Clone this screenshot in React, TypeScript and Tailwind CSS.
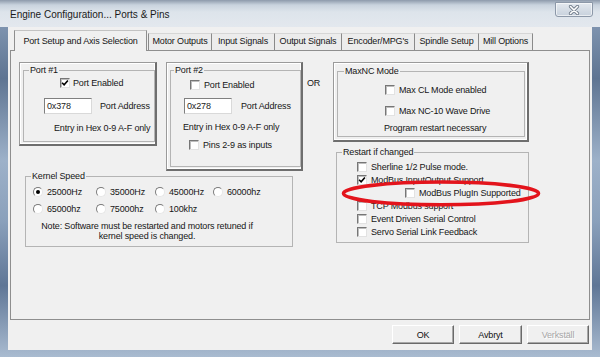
import React from "react";

function CheckBox({ checked }: { checked?: boolean }) {
  return (
    <span className="relative block w-[10px] h-[10px] shrink-0 bg-white border border-t-[#767676] border-l-[#767676] border-r-[#e2e2e2] border-b-[#e2e2e2] shadow-[inset_1px_1px_0_#bdbdbd]">
      {checked && (
        <svg viewBox="0 0 8 8" className="absolute left-0 top-0 w-[8px] h-[8px]">
          <path d="M1.1 3.7 L3.1 5.8 L6.9 1.4" stroke="#000" strokeWidth="1.6" fill="none" />
        </svg>
      )}
    </span>
  );
}

function Radio({ checked }: { checked?: boolean }) {
  return (
    <span className="flex w-[10px] h-[10px] shrink-0 rounded-full bg-white border border-t-[#7a7a7a] border-l-[#7a7a7a] border-r-[#e6e6e6] border-b-[#e6e6e6] items-center justify-center">
      {checked && <span className="block w-[4px] h-[4px] rounded-full bg-black" />}
    </span>
  );
}

function CheckRow({
  label,
  checked,
  className,
  gap = "gap-[4px]",
}: {
  label: string;
  checked?: boolean;
  className?: string;
  gap?: string;
}) {
  return (
    <div className={`flex items-center ${gap} ${className ?? ""}`}>
      <CheckBox checked={checked} />
      <span className="whitespace-nowrap">{label}</span>
    </div>
  );
}

function RadioItem({ label, checked, w }: { label: string; checked?: boolean; w: string }) {
  return (
    <div className={`flex items-center gap-[4px] ${w}`}>
      <Radio checked={checked} />
      <span className="whitespace-nowrap">{label}</span>
    </div>
  );
}

function TextBox({ value }: { value: string }) {
  return (
    <div className="w-[48px] h-[16px] bg-white border border-t-[#7f7f7f] border-l-[#7f7f7f] border-r-[#d9d9d9] border-b-[#d9d9d9] pl-[2px] flex items-center text-[#222]">
      {value}
    </div>
  );
}

function Group({
  label,
  className,
  legendMl,
  children,
}: {
  label: string;
  className: string;
  legendMl: string;
  children?: React.ReactNode;
}) {
  return (
    <fieldset className={`border border-[#b4b4b4] min-w-0 ${className}`}>
      <legend className={`${legendMl} px-[1px] leading-[10px] whitespace-nowrap`}>{label}</legend>
      {children}
    </fieldset>
  );
}

function Panel3D({ className, children }: { className: string; children?: React.ReactNode }) {
  return (
    <div
      className={`border border-t-[#9a9a9a] border-l-[#9a9a9a] border-r-2 border-b-2 border-r-[#6e6e6e] border-b-[#6e6e6e] shadow-[inset_1px_1px_0_#ffffff,inset_-1px_-1px_0_#ffffff] ${className}`}
    >
      {children}
    </div>
  );
}

function Tab({ label, w, first }: { label: string; w: string; first?: boolean }) {
  return (
    <div
      className={`${w} h-[17px] flex justify-center pt-[2px] border-t border-t-[#d6d6d6] border-r border-r-[#8a8a8a] ${
        first ? "ml-[1px] border-l border-l-[#8a8a8a]" : ""
      } bg-[#ececec] whitespace-nowrap`}
    >
      {label}
    </div>
  );
}

function Btn({ label, w, disabled }: { label: string; w: string; disabled?: boolean }) {
  return (
    <div
      className={`${w} h-[19px] flex items-center justify-center bg-[#f0f0f0] border border-t-white border-l-white border-r-[#6a6a6a] border-b-[#6a6a6a] shadow-[inset_-1px_-1px_0_#a8a8a8] ${
        disabled ? "text-[#a6a6a6] [text-shadow:1px_1px_0_#ffffff]" : "text-[#111]"
      }`}
    >
      {label}
    </div>
  );
}

export default function App() {
  return (
    <div className="w-[600px] h-[357px] relative overflow-hidden flex flex-col font-['Liberation_Sans',Arial,sans-serif] text-[9px] leading-[10px] tracking-[-0.15px] text-[#161616] bg-[linear-gradient(to_bottom,#8ea3bd_0%,#5e7492_22%,#9db1c9_45%,#8aa0bb_62%,#5f7696_80%,#a9bbd0_100%)]">
      {/* title bar */}
      <div className="h-[27px] shrink-0 flex items-start justify-between bg-[linear-gradient(to_bottom,#8d9aab_0px,#c9d3de_5px,#dde4eb_12px,#e3e8ee_27px)]">
        <div className="pl-[10px] pt-[9px] text-[10px] leading-[11px] tracking-normal text-[#1a1a1a] whitespace-nowrap">
          Engine Configuration... Ports &amp; Pins
        </div>
        <div className="mt-[2px] mr-[7px] w-[38px] h-[15px] rounded-b-[3px] border border-[#8c98a8] bg-[linear-gradient(to_bottom,#e4e9ef,#c7d1dc)] shadow-[inset_0_0_0_1px_rgba(255,255,255,0.6)] flex items-center justify-center">
          <svg width="12" height="10" viewBox="0 0 12 10">
            <path d="M2.5 1.5 L9.5 8.5 M9.5 1.5 L2.5 8.5" stroke="#6f7b89" strokeWidth="3.2" strokeLinecap="round" />
            <path d="M2.5 1.5 L9.5 8.5 M9.5 1.5 L2.5 8.5" stroke="#ffffff" strokeWidth="1.6" strokeLinecap="round" />
          </svg>
        </div>
      </div>

      {/* client area */}
      <div className="mx-[8px] h-[323px] shrink-0 bg-[#f0f0f0] flex flex-col">
        {/* tab strip */}
        <div className="h-[23px] flex items-end pl-[6px]">
          <div className="relative z-10 w-[133px] h-[21px] mb-[-1px] flex justify-center pt-[5px] border border-b-0 border-[#8e8e8e] border-t-[#c2c2c2] bg-[#f0f0f0] whitespace-nowrap">
            Port Setup and Axis Selection
          </div>
          <Tab label="Motor Outputs" w="w-[64px]" first />
          <Tab label="Input Signals" w="w-[63px]" />
          <Tab label="Output Signals" w="w-[67px]" />
          <Tab label="Encoder/MPG's" w="w-[73px]" />
          <Tab label="Spindle Setup" w="w-[64px]" />
          <Tab label="Mill Options" w="w-[54px]" />
        </div>

        {/* tab page */}
        <div className="ml-[2px] w-[580px] h-[270px] border border-[#8e8e8e] bg-[#f0f0f0]">
          <div className="flex items-start pt-[11px] pl-[8px]">
            {/* left column */}
            <div className="w-[284px] flex flex-col">
              <div className="flex items-start gap-[9px]">
                <Panel3D className="w-[138px] h-[84px] pt-[2px] pl-[3px]">
                  <Group label="Port #1" className="w-[132px] h-[77px]" legendMl="ml-[5px]">
                    <CheckRow label="Port Enabled" checked className="mt-[3px] pl-[36px]" gap="gap-[3px]" />
                    <div className="mt-[10px] pl-[20px] flex items-center gap-[8px]">
                      <TextBox value="0x378" />
                      <span className="whitespace-nowrap">Port Address</span>
                    </div>
                    <div className="mt-[9px] pl-[30px] whitespace-nowrap">Entry in Hex 0-9 A-F only</div>
                  </Group>
                </Panel3D>
                <Panel3D className="w-[137px] h-[109px] pt-[2px] pl-[3px]">
                  <Group label="Port #2" className="w-[131px] h-[102px]" legendMl="ml-[3px]">
                    <CheckRow label="Port Enabled" className="mt-[5px] pl-[19px]" />
                    <div className="mt-[8px] pl-[13px] flex items-center gap-[9px]">
                      <TextBox value="0x278" />
                      <span className="whitespace-nowrap">Port Address</span>
                    </div>
                    <div className="mt-[8px] pl-[12px] whitespace-nowrap">Entry in Hex 0-9 A-F only</div>
                    <CheckRow label="Pins 2-9 as inputs" className="mt-[8px] pl-[18px]" />
                  </Group>
                </Panel3D>
              </div>
              <Group label="Kernel Speed" className="ml-[6px] w-[268px] h-[76px]" legendMl="ml-[5px]">
                <div className="mt-[6px] pl-[7px] flex items-center">
                  <RadioItem label="25000Hz" checked w="w-[63px]" />
                  <RadioItem label="35000Hz" w="w-[59px]" />
                  <RadioItem label="45000Hz" w="w-[58px]" />
                  <RadioItem label="60000hz" w="w-[60px]" />
                </div>
                <div className="mt-[7px] pl-[7px] flex items-center">
                  <RadioItem label="65000hz" w="w-[63px]" />
                  <RadioItem label="75000hz" w="w-[59px]" />
                  <RadioItem label="100khz" w="w-[58px]" />
                </div>
                <div className="mt-[7px] ml-[6px] w-[230px] text-center whitespace-nowrap">
                  Note: Software must be restarted and motors retuned if
                  <br />
                  kernel speed is changed.
                </div>
              </Group>
            </div>

            {/* OR */}
            <div className="w-[30px] pt-[16px] pl-[4px]">OR</div>

            {/* right column */}
            <div className="w-[196px] flex flex-col">
              <Panel3D className="w-[196px] h-[80px] pt-[3px] pl-[3px]">
                <Group label="MaxNC Mode" className="w-[188px] h-[71px]" legendMl="ml-[6px]">
                  <CheckRow label="Max CL Mode enabled" className="mt-[9px] pl-[47px]" />
                  <CheckRow label="Max NC-10 Wave Drive" className="mt-[11px] pl-[47px]" />
                  <div className="mt-[7px] pl-[46px] whitespace-nowrap">Program restart necessary</div>
                </Group>
              </Panel3D>
              <Group label="Restart if changed" className="ml-[3px] mt-[5px] w-[193px] h-[96px]" legendMl="ml-[5px]">
                <div className="mt-[3px] flex flex-col">
                  <CheckRow label="Sherline 1/2 Pulse mode." className="h-[13px] pl-[20px]" />
                  <CheckRow label="ModBus InputOutput Support" checked className="h-[13px] pl-[20px]" />
                  <CheckRow label="ModBus PlugIn Supported" className="h-[13px] pl-[68px]" />
                  <CheckRow label="TCP Modbus support" className="h-[13px] pl-[20px]" />
                  <CheckRow label="Event Driven Serial Control" className="h-[13px] pl-[20px]" />
                  <CheckRow label="Servo Serial Link Feedback" className="h-[13px] pl-[20px]" />
                </div>
              </Group>
            </div>
          </div>
        </div>

        {/* buttons */}
        <div className="mt-[5px] flex justify-end gap-[5px] pr-[3px]">
          <Btn label="OK" w="w-[62px]" />
          <Btn label="Avbryt" w="w-[63px]" />
          <Btn label="Verkställ" w="w-[62px]" disabled />
        </div>
      </div>

      {/* red annotation ellipse */}
      <svg className="absolute left-[341px] top-[180px]" width="200" height="27" viewBox="0 0 200 27">
        <ellipse cx="100" cy="13.4" rx="97.5" ry="11.4" fill="none" stroke="#e3141c" strokeWidth="3.6" />
      </svg>
    </div>
  );
}
